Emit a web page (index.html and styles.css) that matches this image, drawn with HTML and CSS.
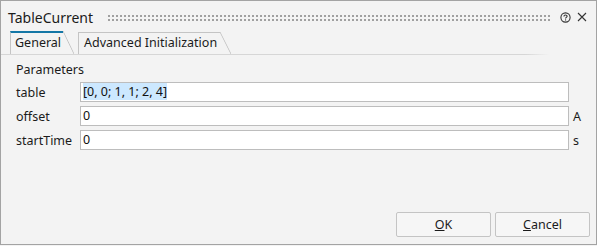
FILE: index.html
```html
<!DOCTYPE html>
<html lang="en">
<head>
    <meta charset="UTF-8">
    <title>TableCurrent</title>
    <link rel="stylesheet" href="styles.css">
</head>
<body>
    <!-- Parameter dialog -->
    <div class="dialog">
        <div class="titlebar">
            <span class="title">TableCurrent</span>
            <span class="grip"></span>
            <svg class="icon" width="11" height="11" viewBox="0 0 11 11">
                <circle cx="5.5" cy="5.5" r="4.6" fill="none" stroke="#333" stroke-width="1.1"/>
                <path d="M3.9 4.4 C3.9 2.6 7.1 2.6 7.1 4.3 C7.1 5.4 5.5 5.4 5.5 6.6" fill="none" stroke="#333" stroke-width="1.1"/>
                <rect x="5" y="7.4" width="1.1" height="1.1" fill="#333"/>
            </svg>
            <svg class="icon close" width="10" height="10" viewBox="0 0 10 10">
                <path d="M1 1 L9 9 M9 1 L1 9" stroke="#333" stroke-width="1.1"/>
            </svg>
        </div>

        <!-- Tabs -->
        <div class="tabs">
            <div class="tab active"><span class="tab-label">General</span></div>
            <div class="tab"><span class="tab-label">Advanced Initialization</span></div>
        </div>

        <div class="panel">
            <div class="group-title">Parameters</div>
            <div class="params">
                <label for="pTable">table</label>
                <div class="field"><span class="selected">[0, 0; 1, 1; 2, 4]</span></div>
                <span class="unit"></span>

                <label for="pOffset">offset</label>
                <div class="field">0</div>
                <span class="unit">A</span>

                <label for="pStart">startTime</label>
                <div class="field">0</div>
                <span class="unit">s</span>
            </div>
        </div>

        <div class="buttons">
            <button><u>O</u>K</button>
            <button><u>C</u>ancel</button>
        </div>
    </div>
</body>
</html>
```

FILE: styles.css
```css
body {
    margin: 0;
    background-color: #f3f3f3;
    font-family: "Noto Sans", sans-serif;
    font-size: 12.5px;
    color: #1b1b1b;
}

.dialog {
    width: 597px;
    height: 245px;
    box-sizing: border-box;
    border: 1px solid #a3a3a3;
    display: flex;
    flex-direction: column;
    background-color: #f3f3f3;
}

/* title bar */
.titlebar {
    height: 30px;
    display: flex;
    align-items: center;
    padding: 0 9px 0 7px;
}

.title {
    font-size: 14px;
    margin-top: 3px;
}

.grip {
    flex: 1;
    height: 8px;
    margin: 3px 8px 0 14px;
    background-image: radial-gradient(circle, #a0a0a0 1px, transparent 1.2px);
    background-size: 4px 4px;
}

.icon {
    margin-top: 2px;
}

.close {
    margin-left: 6px;
}

/* tabs */
.tabs {
    display: flex;
    align-items: flex-end;
    padding-left: 9px;
    border-bottom: 1px solid #d6d6d6;
    border-image: linear-gradient(to right, #d6d6d6 88%, transparent 92%) 1;
}

.tab {
    display: flex;
    margin-right: 4px;
}

.tab::after {
    content: "";
    width: 11px;
    background: linear-gradient(to top right, transparent calc(50% - 0.8px), #c4c4c4 50%, transparent calc(50% + 0.8px));
}

.tab-label {
    height: 21px;
    line-height: 20px;
    padding: 0 3px 0 5px;
    border-left: 1px solid #c4c4c4;
    border-top: 1px solid #c4c4c4;
}

.tab.active .tab-label {
    height: 21px;
    padding: 0 2px 0 4px;
    border-top: 2px solid #1477a6;
}

/* parameters */
.panel {
    padding: 6px 7px 0 15px;
}

.group-title {
    height: 21px;
    line-height: 18px;
}

.params {
    display: grid;
    grid-template-columns: 64px 1fr 20px;
    row-gap: 4px;
    align-items: center;
}

.field {
    height: 20px;
    box-sizing: border-box;
    border: 1px solid #bdbdbd;
    background-color: white;
    padding-left: 2px;
    line-height: 18px;
    color: #111;
}

.selected {
    background-color: #cce8ff;
}

.unit {
    padding-left: 4px;
}

/* dialog buttons */
.buttons {
    margin-top: auto;
    display: flex;
    justify-content: flex-end;
    gap: 4px;
    padding: 0 6px 7px 0;
}

button {
    width: 95px;
    height: 25px;
    font-family: "Noto Sans", sans-serif;
    font-size: 12.5px;
    color: #1b1b1b;
    background-color: #f6f6f6;
    border: 1px solid #c4c4c4;
    border-radius: 2px;
}
```
